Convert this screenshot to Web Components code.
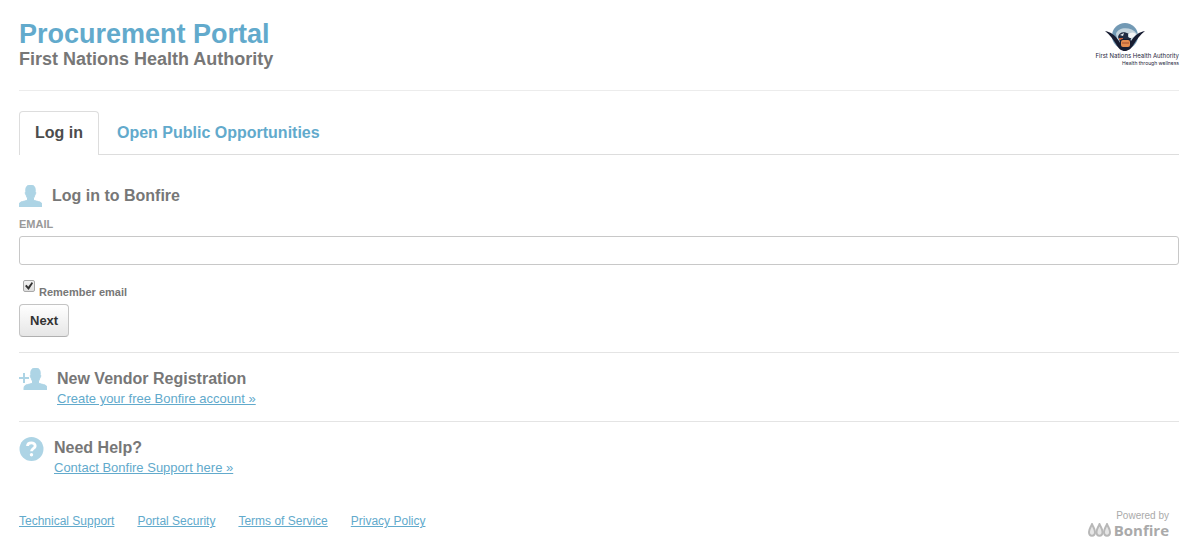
<!DOCTYPE html>
<html lang="en">
<head>
  <meta charset="utf-8">
  <meta name="viewport" content="width=device-width, initial-scale=1">
  <title>Procurement Portal</title>
  <style>
    body {
      background: #ffffff;
      color: #777777;
      font-family: 'Liberation Sans', Arial, sans-serif;
      font-size: 13px;
      margin: 0;
      --accent: #62aacc;
      --icon: #add4e5;
      --rule: #e4e4e4;
    }
  </style>
</head>
<body>
  <bp-portal></bp-portal>

  <script>
    // Attach an open shadow root holding the markup
    function attach( element, html ) {
      const template = document.createElement( 'template' );
      template.innerHTML = html;
      element.attachShadow( {mode: 'open'} );
      element.shadowRoot.appendChild( template.content.cloneNode( true ) );
    }

    // Customer logo
    class BonfireAgency extends HTMLElement {
      constructor() {
        super();
        attach( this, /* template */ `
          <style>
            :host {
              align-items: center;
              color: #25253a;
              display: flex;
              flex-direction: column;
              font-family: Inter, sans-serif;
              font-size: 6px;
              line-height: 8px;
              white-space: nowrap;
            }

            svg {
              display: block;
              height: 30px;
              margin: 0 24px 0 0;
              width: 42px;
            }

            p {
              margin: 0;
            }

            p:last-of-type {
              align-self: flex-end;
              font-size: 5px;
              line-height: 6px;
            }
          </style>
          <svg viewBox="0 0 42 30" aria-hidden="true">
            <circle cx="21" cy="14" r="13" fill="#7299b4" />
            <path d="M12 12C14 5 27 4 33 12L28 21L21 25L14 21Z" fill="#c4d4dd" />
            <path d="M1 9C7 10 11 13 15 19C17 23 19 26 21 27C23 26 25 23 27 19C31 13 35 10 41 9C36 13 33 17 30 22C27 27 24 29 21 29C17 29 15 27 12 22C9 17 6 13 1 9Z" fill="#171c31" />
            <path d="M14 15C15 10 20 9 25 12C23 14 24 16 27 16L26 20L16 20Z" fill="#202b42" />
            <path d="M24 12Q29 9 32 12Q30 16 26 16Z" fill="#f5f6f7" />
            <path d="M16 13L20 11L19 14Z" fill="#e8edf0" />
            <rect x="15" y="16" width="4" height="2" fill="#c65e35" />
            <rect x="16" y="17" width="11" height="10" rx="3" fill="#171c31" />
            <rect x="17" y="18" width="9" height="7" rx="2" fill="#e58b4f" />
            <path d="M18 21H25" stroke="#a54f2e" />
          </svg>
          <p>First Nations Health Authority</p>
          <p>Health through wellness</p>
        ` );
      }
    }

    // Title, subtitle and logo
    class BonfireHeader extends HTMLElement {
      constructor() {
        super();
        attach( this, /* template */ `
          <style>
            :host {
              align-items: flex-start;
              border-bottom: solid 1px #ececec;
              display: flex;
              justify-content: space-between;
              padding: 18px 0 22px 0;
            }

            h1 {
              color: var( --accent );
              font-size: 27px;
              line-height: 32px;
              margin: 0;
            }

            h2 {
              font-size: 18px;
              line-height: 18px;
              margin: 0;
            }

            bp-agency {
              padding: 4px 0 0 0;
            }
          </style>
          <div>
            <h1><slot name="title"></slot></h1>
            <h2><slot name="organization"></slot></h2>
          </div>
          <bp-agency></bp-agency>
        ` );
      }
    }

    // Tab strip
    class BonfireTabs extends HTMLElement {
      constructor() {
        super();
        attach( this, /* template */ `
          <style>
            :host {
              border-bottom: solid 1px #dddddd;
              display: flex;
              gap: 2px;
              margin: 20px 0 0 0;
            }

            a {
              border: solid 1px transparent;
              border-bottom: none;
              border-radius: 4px 4px 0 0;
              color: var( --accent );
              font-size: 16px;
              font-weight: 700;
              line-height: 20px;
              padding: 11px 15px;
              text-decoration: none;
            }

            a[aria-current] {
              background: #ffffff;
              border-color: #dddddd;
              color: #4c4c4c;
              margin-bottom: -1px;
              padding-bottom: 12px;
            }
          </style>
          <a href="#login" aria-current="page">Log in</a>
          <a href="#opportunities">Open Public Opportunities</a>
        ` );
      }
    }

    // Person, person with plus, or question mark
    class BonfireIcon extends HTMLElement {
      constructor() {
        super();
        attach( this, /* template */ `
          <style>
            :host {
              color: var( --icon );
              display: block;
              flex-shrink: 0;
            }

            svg {
              display: block;
              fill: currentColor;
            }
          </style>
        ` );
      }

      connectedCallback() {
        const person = 'M11.5 0C8 0 6.8 2 6.8 5V6.5C6 7 6.2 9.5 7.2 10C7.5 11.5 8 12.5 8.5 13V15C7 16 4 16.3 2 17Q0 17.7 0 20V22H23V20Q23 17.7 21 17C19 16.3 16 16 14.5 15V13C15 12.5 15.5 11.5 15.8 10C16.8 9.5 17 7 16.2 6.5V5C16.2 2 15 0 11.5 0Z';
        const art = {
          person: `<svg width="23" height="22" viewBox="0 0 23 22"><path d="${person}" stroke="currentColor" /></svg>`,
          add: `<svg width="28" height="22" viewBox="0 0 28 22"><path transform="translate(5 0)" d="${person}" stroke="currentColor" /><path d="M0 9H4V5H6V9H10V11H6V15H4V11H0Z" /></svg>`,
          help: '<svg width="25" height="24" viewBox="0 0 25 24"><circle cx="12.5" cy="12" r="12" /><path d="M8.5 9C8.7 4.8 16.2 4.8 16.2 9C16.2 11.6 12.5 11.2 12.5 14.3" fill="none" stroke="#ffffff" stroke-width="2.8" /><circle cx="12.5" cy="17.8" r="1.7" fill="#ffffff" /></svg>'
        };
        this.shadowRoot.querySelector( 'svg' )?.remove();
        this.shadowRoot.querySelector( 'style' ).insertAdjacentHTML( 'afterend', art[this.getAttribute( 'name' )] );
      }
    }

    // Email form
    class BonfireLogin extends HTMLElement {
      constructor() {
        super();
        attach( this, /* template */ `
          <style>
            :host {
              display: block;
              padding: 30px 0 15px 0;
            }

            form {
              align-items: flex-start;
              display: flex;
              flex-direction: column;
            }

            header {
              align-items: center;
              display: flex;
              gap: 10px;
            }

            h3 {
              font-size: 16px;
              line-height: 20px;
              margin: 0;
            }

            label {
              font-size: 11px;
              font-weight: 700;
              line-height: 14px;
            }

            label[for=email] {
              color: #999999;
              margin: 10px 0 5px 0;
            }

            #email {
              border: solid 1px #c8c8c8;
              border-radius: 3px;
              box-sizing: border-box;
              font: inherit;
              height: 29px;
              outline: none;
              padding: 4px 6px;
              width: 100%;
            }

            .remember {
              align-items: flex-start;
              display: flex;
              gap: 4px;
              margin: 15px 0 5px 4px;
            }

            .remember label {
              padding: 5px 0 0 0;
            }

            #remember {
              appearance: none;
              background: linear-gradient( #f2f2f2, #dedede );
              border: solid 1px #a8a8a8;
              border-radius: 2px;
              box-sizing: border-box;
              height: 12px;
              margin: 0;
              width: 12px;
            }

            #remember:checked::before {
              background: #333333;
              clip-path: polygon( 0 50%, 20% 35%, 40% 60%, 85% 0, 100% 15%, 45% 100% );
              content: '';
              display: block;
              height: 8px;
              margin: 1px;
              width: 8px;
            }

            button {
              background: linear-gradient( #ffffff, #e6e6e6 );
              border: solid 1px #c4c4c4;
              border-bottom-color: #b0b0b0;
              border-radius: 4px;
              color: #333333;
              cursor: pointer;
              font-family: inherit;
              font-size: 13px;
              font-weight: 700;
              line-height: 19px;
              padding: 6px 10px;
            }
          </style>
          <form onsubmit="return false">
            <header>
              <bp-icon name="person"></bp-icon>
              <h3>Log in to Bonfire</h3>
            </header>
            <label for="email">EMAIL</label>
            <input id="email" type="email">
            <div class="remember">
              <input id="remember" type="checkbox" checked>
              <label for="remember">Remember email</label>
            </div>
            <button>Next</button>
          </form>
        ` );
      }
    }

    // Ruled row with icon, heading and link
    class BonfireAction extends HTMLElement {
      constructor() {
        super();
        attach( this, /* template */ `
          <style>
            :host {
              border-top: solid 1px var( --rule );
              display: flex;
              gap: 10px;
              padding: 15px 0 12px 0;
            }

            h3 {
              font-size: 16px;
              line-height: 20px;
              margin: 0;
              padding: 1px 0 0 0;
            }

            ::slotted( a ) {
              color: var( --accent );
              display: block;
              line-height: 20px;
            }
          </style>
          <bp-icon></bp-icon>
          <div>
            <h3></h3>
            <slot></slot>
          </div>
        ` );
      }

      connectedCallback() {
        const icon = document.createElement( 'bp-icon' );
        icon.setAttribute( 'name', this.getAttribute( 'icon' ) );
        this.shadowRoot.querySelector( 'bp-icon' ).replaceWith( icon );
        this.shadowRoot.querySelector( 'h3' ).innerText = this.getAttribute( 'heading' );
      }
    }

    // Links and vendor mark
    class BonfireFooter extends HTMLElement {
      constructor() {
        super();
        attach( this, /* template */ `
          <style>
            :host {
              display: flex;
              font-size: 12px;
              justify-content: space-between;
              padding: 19px 10px 0 0;
            }

            nav {
              display: flex;
              gap: 23px;
              padding: 4px 0 0 0;
            }

            nav a {
              color: var( --accent );
              line-height: 16px;
            }

            .powered {
              color: #aaaaaa;
              font-size: 10px;
              line-height: 14px;
              text-align: right;
            }

            .mark {
              align-items: center;
              display: flex;
              font-family: 'Open Sans', sans-serif;
              font-size: 15px;
              font-weight: 700;
              gap: 3px;
              line-height: 14px;
            }

            svg {
              display: block;
            }
          </style>
          <nav>
            <a href="#support">Technical Support</a>
            <a href="#security">Portal Security</a>
            <a href="#terms">Terms of Service</a>
            <a href="#privacy">Privacy Policy</a>
          </nav>
          <div class="powered">
            <div>Powered by</div>
            <div class="mark">
              <svg width="23" height="14" viewBox="0 0 23 14" fill="#e6e6e6" stroke="#b8b8b8" stroke-width="2" stroke-linejoin="round" aria-hidden="true">
                <path d="M4 1C3 4 1 6 1 9C1 14 7 14 7 9C7 6 5 4 4 1Z" />
                <path d="M11.5 1C10.5 4 8.5 6 8.5 9C8.5 14 14.5 14 14.5 9C14.5 6 12.5 4 11.5 1Z" />
                <path d="M19 1C18 4 16 6 16 9C16 14 22 14 22 9C22 6 20 4 19 1Z" />
              </svg>
              <span>Bonfire</span>
            </div>
          </div>
        ` );
      }
    }

    // Page
    class BonfirePortal extends HTMLElement {
      constructor() {
        super();
        attach( this, /* template */ `
          <style>
            :host {
              display: block;
              padding: 0 18px 0 19px;
            }
          </style>
          <bp-header>
            <span slot="title">Procurement Portal</span>
            <span slot="organization">First Nations Health Authority</span>
          </bp-header>
          <bp-tabs></bp-tabs>
          <bp-login></bp-login>
          <bp-action icon="add" heading="New Vendor Registration">
            <a href="#register">Create your free Bonfire account »</a>
          </bp-action>
          <bp-action icon="help" heading="Need Help?">
            <a href="#help">Contact Bonfire Support here »</a>
          </bp-action>
          <bp-footer></bp-footer>
        ` );
      }
    }

    window.customElements.define( 'bp-agency', BonfireAgency );
    window.customElements.define( 'bp-header', BonfireHeader );
    window.customElements.define( 'bp-tabs', BonfireTabs );
    window.customElements.define( 'bp-icon', BonfireIcon );
    window.customElements.define( 'bp-login', BonfireLogin );
    window.customElements.define( 'bp-action', BonfireAction );
    window.customElements.define( 'bp-footer', BonfireFooter );
    window.customElements.define( 'bp-portal', BonfirePortal );
  </script>
</body>
</html>
